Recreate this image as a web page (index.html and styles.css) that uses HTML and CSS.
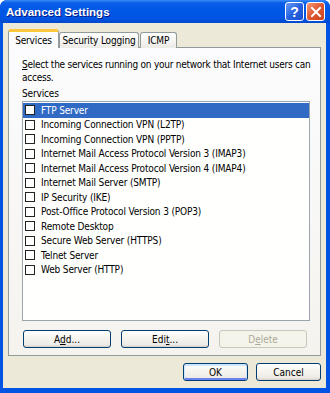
FILE: index.html
```html
<!DOCTYPE html>
<html lang="en">
<head>
    <meta charset="UTF-8">
    <meta name="viewport" content="width=device-width, initial-scale=1.0">
    <title>Advanced Settings</title>
    <link rel="stylesheet" href="styles.css">
</head>
<body>
    <div class="window">
        <div class="titlebar">
            <span class="title">Advanced Settings</span>
            <div class="caption-buttons">
                <span class="cap-btn help">?</span>
                <span class="cap-btn close">
                    <svg width="12" height="12" viewBox="0 0 12 12">
                        <path d="M2 2 L10 10 M10 2 L2 10" stroke="#fff" stroke-width="2" stroke-linecap="square"/>
                    </svg>
                </span>
            </div>
        </div>

        <div class="client">
            <div class="tabs">
                <div class="tab active">Services</div>
                <div class="tab tab-logging">Security Logging</div>
                <div class="tab tab-icmp">ICMP</div>
            </div>

            <div class="panel">
                <p class="desc"><u>S</u>elect the services running on your network that Internet users can<br>access.</p>
                <div class="list-label">Services</div>
                <ul class="list">
                    <li class="selected"><span class="check"></span>FTP Server</li>
                    <li><span class="check"></span>Incoming Connection VPN (L2TP)</li>
                    <li><span class="check"></span>Incoming Connection VPN (PPTP)</li>
                    <li><span class="check"></span>Internet Mail Access Protocol Version 3 (IMAP3)</li>
                    <li><span class="check"></span>Internet Mail Access Protocol Version 4 (IMAP4)</li>
                    <li><span class="check"></span>Internet Mail Server (SMTP)</li>
                    <li><span class="check"></span>IP Security (IKE)</li>
                    <li><span class="check"></span>Post-Office Protocol Version 3 (POP3)</li>
                    <li><span class="check"></span>Remote Desktop</li>
                    <li><span class="check"></span>Secure Web Server (HTTPS)</li>
                    <li><span class="check"></span>Telnet Server</li>
                    <li><span class="check"></span>Web Server (HTTP)</li>
                </ul>
                <div class="panel-buttons">
                    <button class="btn wide">A<u>d</u>d...</button>
                    <button class="btn wide">Edi<u>t</u>...</button>
                    <button class="btn wide" disabled>D<u>e</u>lete</button>
                </div>
            </div>

            <div class="dialog-buttons">
                <button class="btn default">OK</button>
                <button class="btn">Cancel</button>
            </div>
        </div>
    </div>
</body>
</html>
```

FILE: styles.css
```css
* {
    box-sizing: border-box;
}

body {
    margin: 0;
    background: #fff;
    font-family: 'DejaVu Sans', 'Liberation Sans', sans-serif;
    font-stretch: condensed;
    font-size: 10px;
    letter-spacing: -0.15px;
    color: #000;
}

.window {
    width: 330px;
    height: 393px;
    display: flex;
    flex-direction: column;
    background: #0054e3;
    border-radius: 7px 7px 0 0;
    overflow: hidden;
}

/* title bar */
.titlebar {
    height: 23px;
    flex: none;
    display: flex;
    align-items: center;
    padding: 0 5px 0 6px;
    background: linear-gradient(to bottom, #3c8cf7 0%, #0a5fea 12%, #0058e6 40%, #0054e3 80%, #0048cc 100%);
}

.title {
    flex: 1;
    color: #fff;
    font-family: 'Liberation Sans', sans-serif;
    font-stretch: normal;
    font-weight: bold;
    font-size: 11.5px;
    letter-spacing: 0;
    text-shadow: 1px 1px #0a1883;
}

.caption-buttons {
    display: flex;
    gap: 2px;
}

.cap-btn {
    width: 19px;
    height: 19px;
    border: 1px solid #fff;
    border-radius: 3px;
    display: flex;
    align-items: center;
    justify-content: center;
}

.help {
    background: linear-gradient(135deg, #6a9cf5 0%, #2663e0 50%, #1a4fd0 100%);
    color: #fff;
    font-family: 'Liberation Sans', sans-serif;
    font-stretch: normal;
    font-weight: bold;
    font-size: 14px;
}

.close {
    background: linear-gradient(135deg, #f39a7c 0%, #e0582f 50%, #c9401c 100%);
}

/* client area */
.client {
    flex: 1;
    margin: 0 4px 5px 3px;
    background: #ece9d8;
    padding: 7px 5px 0 5px;
}

.tabs {
    display: flex;
    align-items: flex-end;
    height: 18px;
    position: relative;
    z-index: 1;
}

.tab {
    height: 16px;
    border: 1px solid #919b9c;
    border-bottom: none;
    border-radius: 3px 3px 0 0;
    background: linear-gradient(to bottom, #fff, #ecebe6);
    display: flex;
    align-items: center;
    justify-content: center;
}

.tab.active {
    width: 51px;
    height: 19px;
    background: #fcfcfe;
    border-top: 3px solid #ffc83c;
    box-shadow: inset 0 1px 0 #fff;
}

.tab-logging {
    width: 80px;
}

.tab-icmp {
    width: 37px;
    margin-left: 1px;
}

.panel {
    height: 309px;
    margin-top: -1px;
    border: 1px solid #919b9c;
    background: linear-gradient(to bottom, #fcfcfe, #f4f3ee);
    padding: 10px 6px 0 13px;
}

.desc {
    margin: 0;
    line-height: 13px;
    letter-spacing: -0.25px;
    white-space: nowrap;
}

.list-label {
    margin-top: 3px;
    line-height: 13px;
}

.list {
    list-style: none;
    margin: 1px 4px 0 0;
    padding: 1px 0 0 0;
    height: 220px;
    border: 1px solid #9ba5b0;
    background: #fffffd;
}

.list li {
    height: 14.5px;
    display: flex;
    align-items: center;
    padding-left: 2px;
    white-space: nowrap;
}

.list li.selected {
    background: #316ac5;
    color: #fff;
}

.check {
    width: 10px;
    height: 10px;
    border: 1px solid #222;
    background: #fff;
    margin-right: 6px;
    flex: none;
}

/* buttons */
.btn {
    height: 18px;
    padding: 0;
    border: 1px solid #003c74;
    border-radius: 3px;
    background: linear-gradient(to bottom, #fff 0%, #f5f4ee 45%, #ecebe6 85%, #d6d0c5 100%);
    font: inherit;
    color: #000;
    width: 65px;
}

.btn.wide {
    width: 88px;
}

.btn.default {
    box-shadow: inset 0 1px 0 1px #cee7ff, inset 0 -1px 0 1px #6982ee;
}

.btn:disabled {
    border-color: #c9c7ba;
    background: #f5f4ea;
    color: #aca899;
}

.panel-buttons {
    display: flex;
    gap: 10px;
    margin: 9px 0 0 1px;
}

.dialog-buttons {
    display: flex;
    justify-content: flex-end;
    gap: 8px;
    margin-top: 7px;
}
```
